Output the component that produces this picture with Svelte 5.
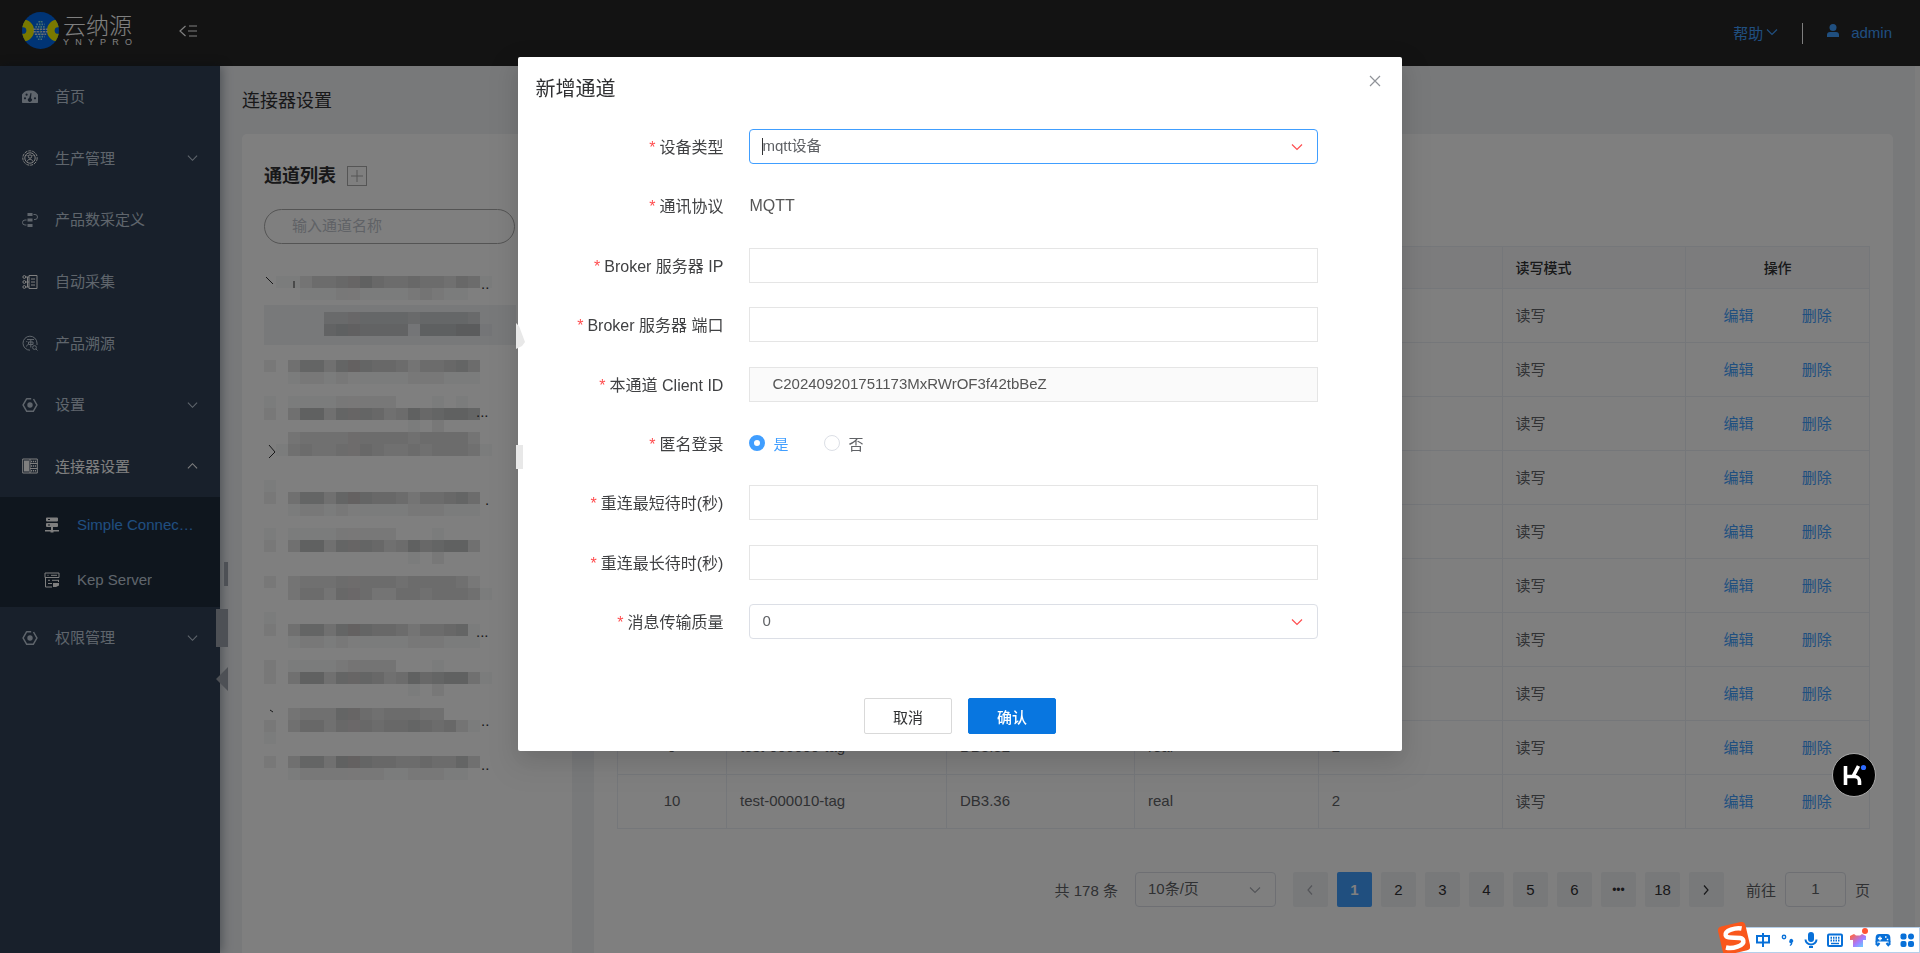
<script>
    const mainMenu = [
        { id: "home", label: "首页", icon: "gauge" },
        { id: "production", label: "生产管理", icon: "gear", arrow: "down" },
        { id: "define", label: "产品数采定义", icon: "flow" },
        { id: "collect", label: "自动采集", icon: "collect" },
        { id: "trace", label: "产品溯源", icon: "trace" },
        { id: "settings", label: "设置", icon: "nut", arrow: "down" },
        {
            id: "connector",
            label: "连接器设置",
            icon: "rack",
            arrow: "up",
            open: true,
        },
    ];

    const subMenu = [
        { id: "simple", label: "Simple Connector", icon: "server", active: true },
        { id: "kep", label: "Kep Server", icon: "form" },
    ];

    const extraMenu = [
        { id: "auth", label: "权限管理", icon: "nut", arrow: "down" },
    ];

    // Shade per 12px cell of the masked channel names, 0 = empty
    const maskRows = [
        "0113556786556554651",
        "0001112211112321100",
        "0000000000000000000",
        "0000044555554555540",
        "0000067766661777881",
        "0000000000000000000",
        "0000000000000000000",
        "2047747876653556750",
        "0012212111112221110",
        "0000000000000000000",
        "1011112222200010100",
        "2048847776458678870",
        "0000000000001020000",
        "0034444555554555530",
        "0145445565445455541",
        "0000000000000000000",
        "0000000000000000000",
        "1000000000000000000",
        "2047747876653556750",
        "0012212111112221110",
        "0000000000000000000",
        "1011112222200010000",
        "2048847776458678840",
        "0000000000001020000",
        "0000000000000000000",
        "2034445555545555420",
        "0035536653355455541",
        "0000000000000000000",
        "1000000000000000000",
        "2047747876653556710",
        "0012212111112221110",
        "0000000000000000000",
        "2011112333300010000",
        "2048847776458678841",
        "0000000000001020000",
        "0000000000000000000",
        "0034447754555440000",
        "2046646665667656310",
        "1000000000000000000",
        "0000000000000000000",
        "2047748876655655740",
        "0012222222112221100",
    ];
    const maskCells = maskRows.flatMap((line, row) =>
        [...line].map((level, col) => ({ row, col, level: Number(level) })),
    ).filter((cell) => cell.level > 0);

    const tags = Array.from({ length: 10 }, (_, i) => ({
        no: i + 1,
        name: `test-${String(i + 1).padStart(6, "0")}-tag`,
        address: `DB3.${i * 4}`,
        type: "real",
        length: 2,
        mode: "读写",
    }));

    const pages = ["1", "2", "3", "4", "5", "6", "•••", "18"];

    let deviceType = "mqtt设备";
    let anonymous = "yes";
    let quality = "0";
    let clientId = "C202409201751173MxRWrOF3f42tbBeZ";
    let brokerIp = "";
    let brokerPort = "";
    let minDelay = "";
    let maxDelay = "";
</script>

{#snippet chevron(dir)}
    <svg class="chevron" viewBox="0 0 12 12" width="12" height="12">
        {#if dir === "up"}
            <path d="M1 8.5 6 3.5l5 5" />
        {:else if dir === "left"}
            <path d="M8 1.5 4 6l4 4.5" />
        {:else if dir === "right"}
            <path d="M4 1.5 8 6l-4 4.5" />
        {:else}
            <path d="M1 3.5l5 5 5-5" />
        {/if}
    </svg>
{/snippet}

{#snippet menuIcon(name)}
    <svg class="menu-icon {name}" viewBox="0 0 16 16" width="16" height="16">
        {#if name === "gauge"}
            <path
                class="solid"
                fill-rule="evenodd"
                d="M8 1.5a8 8 0 0 0-7.500 12.500h15A8 8 0 0 0 8 1.500ZM3 8.200a1.100 1.100 0 1 1 0 2.200 1.100 1.100 0 0 1 0-2.200ZM4.600 4.600a1.100 1.100 0 1 1 0 2.200 1.100 1.100 0 0 1 0-2.200ZM13 8.200a1.100 1.100 0 1 1 0 2.200 1.100 1.100 0 0 1 0-2.200ZM9.500 4.200 9 9.200a2 2 0 1 1-1.800-.2L8.600 4Z"
            />
        {:else if name === "gear"}
            <circle cx="8" cy="8" r="7.2" stroke-dasharray="3 1" />
            <circle cx="8" cy="8" r="5.2" />
            <circle cx="8" cy="6.5" r="1.7" />
            <path d="M5.3 11.5c.5-3 4.9-3 5.4 0M4.5 5l1 1m6-1-1 1" />
        {:else if name === "flow"}
            <path class="solid" d="M5.500 1h5v3h-5ZM5.500 6.500h5v3h-5ZM5.500 12h5v3h-5Z" />
            <path d="M11.500 2.500h1.500a2.200 2.200 0 0 1 0 5h-1M4.500 8H3a2.500 2.500 0 0 0 0 5h1.500" />
        {:else if name === "collect"}
            <path d="M7 1.500h8v13H7ZM9 5h4M9 8h4M9 11h4" />
            <circle cx="2.3" cy="3" r="1.4" />
            <circle cx="2.3" cy="8" r="1.4" />
            <circle cx="2.3" cy="13" r="1.4" />
            <path d="M4 3h3M4 8h3M4 13h3M5.500 3v10" />
        {:else if name === "trace"}
            <path d="M8 15.200A7 7 0 1 1 15 8v2" />
            <path d="M5 4.500h7M6.500 7h4.500v2.500H6.500ZM8.800 4.500v8M4.300 6l1 1M4.500 11.500l1-2" />
            <circle cx="12.5" cy="12.5" r="1.9" />
            <path d="M14 14l1.500 1.500" />
        {:else if name === "nut"}
            <path
                class="thick"
                d="M4.500 1.700h4.700M11.500 2l3.400 6-3.600 6.300H4.700L1.100 8l3.600-6.300"
            />
            <circle class="solid" cx="8" cy="8" r="2.7" />
        {:else if name === "rack"}
            <path d="M.7 1h14.600v14H.7ZM8 1v14M8 5.500h7.300M8 10.500h7.300" />
            <path class="solid" d="M2 2.500h5v11H2Z" />
            <path class="thick" d="M9 3.500h5M9 8h5M9 12.700h5" stroke-dasharray="1.2 .8" />
        {:else if name === "server"}
            <path
                class="solid"
                fill-rule="evenodd"
                d="M3 .5h10a1 1 0 0 1 1 1v2a1 1 0 0 1-1 1H3a1 1 0 0 1-1-1v-2a1 1 0 0 1 1-1ZM4 2v1h2V2ZM3 6h10a1 1 0 0 1 1 1v2a1 1 0 0 1-1 1H3a1 1 0 0 1-1-1V7a1 1 0 0 1 1-1ZM4 7.500v1h2v-1ZM7 10h2v3h6v1.500H9.500v1h-3v-1H1V13h6Z"
            />
        {:else if name === "form"}
            <path d="M1 1h14v4.500H1ZM1.500 5.500v9.500H8M3.500 3.300h1M7 3.300h6M4 8.300h2M8 8.300h7M4 11.500h4M14.500 8v2" />
            <path class="solid" d="M9 11h6v2.500L12 15H9Z" />
        {/if}
    </svg>
{/snippet}

{#snippet menuItem(item)}
    <a class="menu-item" class:open={item.open} href="#{item.id}">
        {@render menuIcon(item.icon)}
        <span>{item.label}</span>
        {#if item.arrow}{@render chevron(item.arrow)}{/if}
    </a>
{/snippet}

<div class="layout">
    <header class="topbar">
        <div class="logo">
            <svg viewBox="0 0 36 36" width="37" height="37">
                <clipPath id="disc"><circle cx="18" cy="18" r="18" /></clipPath>
                <g clip-path="url(#disc)">
                    <rect width="36" height="36" fill="#0068ea" />
                    <circle cx="1" cy="18" r="7" fill="none" stroke="#f2f200" stroke-width="7.5" />
                    <circle cx="35" cy="18" r="7" fill="none" stroke="#f2f200" stroke-width="7.5" />
                </g>
                <path
                    d="M16 9.500h4M14 12h8M13 14.500h10M14 24h8M15.500 26.500h5"
                    stroke="#8fdcf0"
                    stroke-width="1.6"
                    stroke-dasharray="1.5 1"
                />
                <path
                    d="M11 16.800h14M11 19.200h14M12.500 21.600h11"
                    stroke="#d2dcea"
                    stroke-width="1.5"
                    stroke-dasharray="2.4 .7"
                />
                <path d="M18 9v18" stroke="#3fd1a5" stroke-dasharray="1 2" />
            </svg>
            <div class="brand">
                <span class="brand-cn">云纳源</span>
                <span class="brand-en">
                    {#each "YNYPRO" as letter}<i>{letter}</i>{/each}
                </span>
            </div>
        </div>
        <button class="fold" aria-label="收起菜单">
            <svg viewBox="0 0 18 14" width="18" height="14">
                <path d="M6.500 2 1 7l5.500 5M10 2h8M9 7h9M10 12h8" />
            </svg>
        </button>
        <div class="user-area">
            <a class="help" href="#help">帮助{@render chevron("down")}</a>
            <span class="divider"></span>
            <a class="user" href="#user">
                <svg viewBox="0 0 12 13" width="12" height="13">
                    <circle cx="6" cy="3.5" r="3.5" />
                    <path d="M0 13v-2a3 3 0 0 1 3-3h6a3 3 0 0 1 3 3v2Z" />
                </svg>
                admin
            </a>
        </div>
    </header>

    <div class="body">
        <nav class="sidebar">
            <div class="menu-group">
                {#each mainMenu as item (item.id)}
                    {@render menuItem(item)}
                {/each}
            </div>
            <div class="submenu">
                {#each subMenu as item (item.id)}
                    <a class="sub-item" class:active={item.active} href="#{item.id}">
                        {@render menuIcon(item.icon)}
                        <span>{item.label}</span>
                    </a>
                {/each}
            </div>
            {#each extraMenu as item (item.id)}
                {@render menuItem(item)}
            {/each}
        </nav>

        <main>
            <h1>连接器设置</h1>
            <div class="columns">
                <section class="card channels">
                    <div class="channels-head">
                        <h2>通道列表</h2>
                        <button class="add" aria-label="新增">
                            <svg viewBox="0 0 14 14" width="14" height="14">
                                <path d="M7 1v12M1 7h12" />
                            </svg>
                        </button>
                    </div>
                    <input class="search" aria-label="通道名称" placeholder="输入通道名称" />
                    <svg class="tree" viewBox="0 0 252 504" width="252" height="504">
                        <rect y="29" width="252" height="40" fill="#f0f2f5" />
                        {#each maskCells as cell}
                            <rect
                                x={cell.col * 12}
                                y={cell.row * 12}
                                width="12"
                                height="12"
                                fill={cell.col === 7 ? "#2a1214" : "#0c1012"}
                                fill-opacity={cell.level * 0.032}
                            />
                        {/each}
                        <path d="M2 1l7 7M5 169l6 7-6 6M6 434l3 2" />
                        <path d="M30 5v7" stroke="#c77a20" />
                        <text x="217" y="13">..</text>
                        <text x="212" y="141">...</text>
                        <text x="221" y="229">.</text>
                        <text x="212" y="361">...</text>
                        <text x="217" y="450">..</text>
                        <text x="217" y="494">..</text>
                    </svg>
                </section>

                <section class="card tags">
                    <table>
                        <colgroup>
                            <col class="c-no" />
                            <col class="c-name" />
                            <col class="c-addr" />
                            <col span="4" />
                        </colgroup>
                        <thead>
                            <tr>
                                <th class="center">序号</th>
                                <th>变量名称</th>
                                <th>地址</th>
                                <th>数据类型</th>
                                <th>长度</th>
                                <th>读写模式</th>
                                <th class="center">操作</th>
                            </tr>
                        </thead>
                        <tbody>
                            {#each tags as tag (tag.no)}
                                <tr>
                                    <td class="center">{tag.no}</td>
                                    <td>{tag.name}</td>
                                    <td>{tag.address}</td>
                                    <td>{tag.type}</td>
                                    <td>{tag.length}</td>
                                    <td>{tag.mode}</td>
                                    <td>
                                        <div class="actions">
                                            <a href="#edit">编辑</a>
                                            <a href="#delete">删除</a>
                                        </div>
                                    </td>
                                </tr>
                            {/each}
                        </tbody>
                    </table>

                    <div class="pagination">
                        <span class="total">共 178 条</span>
                        <div class="select-box page-size">
                            <select aria-label="每页条数">
                                <option>10条/页</option>
                            </select>
                            {@render chevron("down")}
                        </div>
                        <div class="pager">
                            <button class="muted" aria-label="上一页">{@render chevron("left")}</button>
                            {#each pages as page}
                                <button class:current={page === "1"} class:more={page === "•••"}>{page}</button>
                            {/each}
                            <button aria-label="下一页">{@render chevron("right")}</button>
                        </div>
                        <label class="jump">
                            前往
                            <input value="1" />
                            页
                        </label>
                    </div>
                </section>
            </div>
        </main>
    </div>
</div>

<div class="overlay">
    <div class="dialog" role="dialog" aria-labelledby="dialog-title">
        <div class="dialog-head">
            <h3 id="dialog-title">新增通道</h3>
            <button class="close" aria-label="关闭">
                <svg viewBox="0 0 12 12" width="12" height="12">
                    <path d="M1 1l10 10M11 1 1 11" />
                </svg>
            </button>
        </div>

        <form>
            <div class="field">
                <label for="device-type">设备类型</label>
                <div class="select-box focused">
                    <select id="device-type" bind:value={deviceType}>
                        <option>mqtt设备</option>
                    </select>
                    <span class="caret"></span>
                    {@render chevron("down")}
                </div>
            </div>
            <div class="field">
                <span class="label">通讯协议</span>
                <span class="plain">MQTT</span>
            </div>
            <div class="field">
                <label for="broker-ip">Broker 服务器 IP</label>
                <input id="broker-ip" type="text" bind:value={brokerIp} />
            </div>
            <div class="field">
                <label for="broker-port">Broker 服务器 端口</label>
                <input id="broker-port" type="text" bind:value={brokerPort} />
            </div>
            <div class="field">
                <label for="client-id">本通道 Client ID</label>
                <input id="client-id" type="text" value={clientId} disabled />
            </div>
            <div class="field">
                <span class="label">匿名登录</span>
                <div class="radios">
                    <label class="radio" class:checked={anonymous === "yes"}>
                        <input type="radio" name="anonymous" value="yes" bind:group={anonymous} />是
                    </label>
                    <label class="radio" class:checked={anonymous === "no"}>
                        <input type="radio" name="anonymous" value="no" bind:group={anonymous} />否
                    </label>
                </div>
            </div>
            <div class="field">
                <label for="min-delay">重连最短待时(秒)</label>
                <input id="min-delay" type="text" bind:value={minDelay} />
            </div>
            <div class="field">
                <label for="max-delay">重连最长待时(秒)</label>
                <input id="max-delay" type="text" bind:value={maxDelay} />
            </div>
            <div class="field">
                <label for="quality">消息传输质量</label>
                <div class="select-box">
                    <select id="quality" bind:value={quality}>
                        <option>0</option>
                        <option>1</option>
                        <option>2</option>
                    </select>
                    {@render chevron("down")}
                </div>
            </div>
        </form>

        <div class="dialog-foot">
            <button>取消</button>
            <button class="primary">确认</button>
        </div>
    </div>
</div>

<!-- Pieces of the side handles that stay above the overlay -->
<svg class="handles" viewBox="0 0 310 370" width="310" height="370">
    <path fill="#4d5055" d="M8 239h4v24H8ZM0 286h12v38H0ZM12 344v24L0 356Z" />
    <path fill="#e8e8e8" d="M300 0l3 3 6 16-3 4-6 3ZM300 122h7v24h-7Z" />
</svg>

<button class="assistant" aria-label="助手">
    <svg viewBox="0 0 42 42" width="42" height="42">
        <path d="M12.500 12v19M12.500 22.500h9a5 5 0 0 1 5 5V31M20 22.500 25.500 12" />
        <circle cx="30.5" cy="13.5" r="2.6" />
    </svg>
</button>

<div class="ime">
    <svg class="ime-logo" viewBox="0 0 32 32" width="32" height="32">
        <g transform="rotate(-13 16 16)">
            <rect x="2" y="2" width="28" height="29" rx="4" fill="#f9571c" />
            <path
                d="M25.500 8.500C20 6 8.500 6.500 8.500 11.500s16 3.500 16 9S12 26.500 6 23.500"
                fill="none"
                stroke="#fff"
                stroke-width="4.5"
            />
        </g>
    </svg>
    <svg viewBox="0 0 16 16" width="16" height="16">
        <path class="line" d="M2 4h12v6.500H2ZM8 1v14" />
    </svg>
    <svg viewBox="0 0 16 16" width="16" height="16">
        <circle class="line thin" cx="5" cy="5" r="1.7" />
        <path d="M10.500 8.500a1.900 1.900 0 1 1 3 1.800c0 2-1 3.200-2.500 3.700l-.3-1c.9-.5 1.200-1 1.100-1.700a2 2 0 0 1-1.300-2.800Z" />
    </svg>
    <svg viewBox="0 0 16 16" width="16" height="16">
        <rect x="5" y="0" width="6" height="10" rx="3" />
        <path class="line" d="M2.500 7.500a5.500 5 0 0 0 11 0M6 15h4" />
    </svg>
    <svg viewBox="0 0 16 16" width="16" height="16">
        <rect class="line" x="1" y="2.5" width="14" height="11.5" rx="1" />
        <path class="line" d="M3.500 5.800h9M3.500 8.500h9" stroke-dasharray="1.5 1" />
        <path class="line thin" d="M4 11.500h8" />
    </svg>
    <svg class="shirt" viewBox="0 0 18 20" width="18" height="20">
        <defs>
            <linearGradient id="shirt" x1="0" y1="0" x2="1" y2="1">
                <stop offset="0.1" stop-color="#ff6648" />
                <stop offset="0.55" stop-color="#a779ff" />
                <stop offset="1" stop-color="#55e6ff" />
            </linearGradient>
        </defs>
        <path fill="url(#shirt)" d="M4 6 0 8v4h3v7h10v-7h3V8l-4-2-2 1.500H6Z" />
        <circle cx="15" cy="3" r="3" fill="#ff5333" />
    </svg>
    <svg viewBox="0 0 16 16" width="16" height="16">
        <path
            fill-rule="evenodd"
            d="M4 2h8c2 0 3 1 3.300 3l.2 4.500h-15L.7 5C1 3 2 2 4 2Zm.3 2.500v1.300H3v1.400h1.300v1.300h1.400V7.200H7V5.800H5.700V4.500ZM10 4.300v1.500h1.500V4.300Zm1.800 2.400v1.500h1.500V6.700Z"
        />
        <path class="line" d="M4.500 11 2 14M11.500 11l2.500 3M1.500 9v4M14.500 9v4" />
    </svg>
    <svg viewBox="0 0 16 16" width="16" height="16">
        <rect x="1.5" y="1.5" width="6" height="6" rx="2" />
        <rect x="9" y="1.5" width="6" height="6" rx="3" />
        <rect x="1.5" y="9" width="6" height="6" rx="2" />
        <rect x="9" y="9" width="6" height="6" rx="2" />
    </svg>
</div>

<style>
    :global(body) {
        margin: 0;
        overflow: hidden;
        background: #f0f2f5;
        font-family: "Liberation Sans", "Noto Sans CJK SC", sans-serif;
        font-size: 15px;
        color: #606266;
    }

    * {
        box-sizing: border-box;
    }

    a {
        color: #409eff;
        text-decoration: none;
    }

    button,
    input,
    select {
        font: inherit;
        color: inherit;
    }

    button {
        padding: 0;
        border: none;
        background: none;
        cursor: pointer;
    }

    svg {
        flex-shrink: 0;
    }

    .chevron {
        fill: none;
        stroke: currentColor;
        stroke-width: 1.2;
    }

    .layout {
        display: flex;
        flex-direction: column;
        height: 100vh;
    }

    /* Top bar */
    .topbar {
        display: flex;
        align-items: center;
        height: 66px;
        flex-shrink: 0;
        padding: 0 28px 0 22px;
        background: #262626;
        color: #fff;
    }

    .logo {
        display: flex;
        align-items: center;
        gap: 4px;
        margin-bottom: 5px;
    }

    .brand {
        display: flex;
        flex-direction: column;
        width: 69px;
    }

    .brand-cn {
        font-size: 23px;
        line-height: 24px;
        font-weight: 300;
    }

    .brand-en {
        display: flex;
        justify-content: space-between;
        font-size: 9px;
        line-height: 9px;
    }

    .brand-en i {
        font-style: normal;
    }

    .fold {
        display: flex;
        margin: 0 0 5px 47px;
    }

    .fold svg {
        fill: none;
        stroke: #fff;
        stroke-width: 1.2;
    }

    .user-area {
        display: flex;
        align-items: center;
        margin-left: auto;
    }

    .help,
    .user {
        display: flex;
        align-items: center;
        padding-bottom: 2px;
    }

    .help {
        gap: 3px;
    }

    .divider {
        width: 1px;
        height: 21px;
        margin: 0 24px;
        background: #fff;
    }

    .user {
        gap: 12px;
    }

    .user svg {
        margin-bottom: 3px;
        fill: #409eff;
    }

    /* Sidebar */
    .body {
        display: flex;
        flex: 1;
        min-height: 0;
    }

    .sidebar {
        width: 220px;
        flex-shrink: 0;
        background: #304156;
        box-shadow: 2px 0 10px rgba(0, 21, 41, 0.35);
        z-index: 1;
    }

    .menu-group {
        display: flex;
        flex-direction: column;
        min-height: 431px;
    }

    .menu-group .menu-item {
        flex: 1;
    }

    .menu-item {
        display: flex;
        align-items: center;
        gap: 17px;
        min-height: 61px;
        padding: 0 22px;
        color: #bfcbd9;
    }

    .menu-item span {
        padding-bottom: 2px;
    }

    .menu-item.open {
        color: #fff;
    }

    .menu-item .chevron {
        width: 11px;
        margin-left: auto;
    }

    .menu-icon {
        fill: none;
        stroke: currentColor;
    }

    .menu-icon .solid {
        fill: currentColor;
        stroke: none;
    }

    .menu-icon .thick {
        stroke-width: 1.5;
    }

    .gear,
    .collect,
    .rack,
    .server,
    .form {
        color: #fff;
    }

    .submenu {
        background: #1f2d3d;
    }

    .sub-item {
        display: flex;
        align-items: center;
        gap: 17px;
        height: 55px;
        padding: 0 24px 0 44px;
        color: #bfcbd9;
    }

    .sub-item span {
        overflow: hidden;
        text-overflow: ellipsis;
        white-space: nowrap;
    }

    .sub-item.active span {
        color: #409eff;
    }

    /* Content */
    main {
        display: flex;
        flex-direction: column;
        flex: 1;
        min-width: 0;
        padding: 0 22px;
        border-right: 5px solid #fafafa;
    }

    h1 {
        margin: 22px 0 20px;
        font-size: 18px;
        line-height: 26px;
        font-weight: 400;
        color: #303133;
    }

    .columns {
        display: flex;
        flex: 1;
        gap: 22px;
        min-height: 0;
    }

    .card {
        padding: 0 22px;
        border-radius: 5px 5px 0 0;
        background: #fff;
    }

    .channels {
        width: 330px;
        flex-shrink: 0;
    }

    .channels-head {
        display: flex;
        align-items: center;
        gap: 11px;
        margin: 28px 0 19px;
    }

    h2 {
        margin: 0;
        font-size: 18px;
        line-height: 28px;
        color: #303133;
    }

    .add {
        display: flex;
        align-items: center;
        justify-content: center;
        width: 20px;
        height: 20px;
        border: 1px solid #aaa;
    }

    .add svg {
        stroke: #aaa;
    }

    .search {
        display: block;
        width: 251px;
        height: 35px;
        padding: 0 27px 2px;
        border: 1px solid #a8a8a8;
        border-radius: 18px;
        background: none;
    }

    .search::placeholder {
        color: #c0c4cc;
    }

    .tree {
        display: block;
        margin-top: 32px;
        fill: #303133;
    }

    .tree path {
        fill: none;
        stroke: #303133;
    }

    .tags {
        flex: 1;
        min-width: 0;
        padding: 112px 23px 0;
    }

    table {
        width: 100%;
        border-collapse: collapse;
        table-layout: fixed;
    }

    .c-no {
        width: 109px;
    }

    .c-name {
        width: 220px;
    }

    .c-addr {
        width: 188px;
    }

    th,
    td {
        height: 54px;
        padding: 0 13px 2px;
        border: 1px solid #ebeef5;
        text-align: left;
    }

    th {
        height: 42px;
        background: #f8f9fb;
        font-size: 14px;
        font-weight: 500;
        color: #303133;
    }

    .center {
        text-align: center;
    }

    .actions {
        display: flex;
        justify-content: center;
        gap: 48px;
    }

    .pagination {
        display: flex;
        align-items: center;
        justify-content: flex-end;
        margin-top: 43px;
    }

    .select-box {
        position: relative;
        flex: 1;
        display: flex;
    }

    .select-box select {
        width: 100%;
        height: 35px;
        padding: 0 12px 3px;
        border: 1px solid #dcdfe6;
        border-radius: 4px;
        background: #fff;
        appearance: none;
    }

    .select-box .chevron {
        position: absolute;
        top: 12px;
        right: 15px;
        pointer-events: none;
    }

    .page-size {
        flex: none;
        width: 141px;
        margin: 0 17px;
    }

    .page-size .chevron {
        color: #a8abb2;
    }

    .pager {
        display: flex;
        gap: 9px;
    }

    .pager button {
        display: flex;
        align-items: center;
        justify-content: center;
        width: 35px;
        height: 35px;
        border-radius: 2px;
        background: #f0f2f5;
        color: #303133;
    }

    .pager .muted {
        color: #a8abb2;
    }

    .pager .current {
        background: #409eff;
        color: #fff;
        font-weight: 700;
    }

    .pager .more {
        font-size: 12px;
    }

    .jump {
        display: flex;
        align-items: center;
        gap: 9px;
        margin-left: 22px;
    }

    .jump input {
        width: 61px;
        height: 35px;
        padding-bottom: 3px;
        border: 1px solid #dcdfe6;
        border-radius: 4px;
        text-align: center;
    }

    /* Dialog */
    .overlay {
        position: fixed;
        inset: 0;
        z-index: 10;
        background: rgba(0, 0, 0, 0.5);
    }

    .dialog {
        width: 46%;
        margin: 57px auto 0;
        padding: 17px;
        border-radius: 2px;
        background: #fff;
        box-shadow:
            0 12px 32px 16px rgba(0, 0, 0, 0.04),
            0 8px 24px rgba(0, 0, 0, 0.12);
    }

    .dialog-head {
        display: flex;
        align-items: flex-start;
        justify-content: space-between;
        margin-bottom: 24px;
    }

    h3 {
        margin: 0;
        font-size: 20px;
        line-height: 31px;
        font-weight: 400;
        color: #303133;
    }

    .close {
        display: flex;
        margin: 1px 4px 0 0;
    }

    .close svg {
        fill: none;
        stroke: #909399;
        stroke-width: 1.2;
    }

    form {
        display: flex;
        flex-direction: column;
        justify-content: space-between;
        min-height: 510px;
        padding-right: 67px;
    }

    .field {
        display: flex;
        align-items: center;
        height: 35px;
    }

    .field > label,
    .field > .label {
        width: 188px;
        margin-right: 26px;
        padding-bottom: 1px;
        flex-shrink: 0;
        text-align: right;
        font-size: 16px;
        color: #404143;
        white-space: nowrap;
    }

    .field > label::before,
    .field > .label::before {
        content: "*";
        margin-right: 4px;
        color: #ff4d4f;
    }

    .field > input {
        flex: 1;
        min-width: 0;
        height: 35px;
        padding: 0 22px 2px;
        border: 1px solid #e5e5e5;
        background: #fff;
    }

    .field > input:disabled {
        background: #fafafa;
        color: #555;
    }

    .field .chevron {
        color: #ff4d4f;
    }

    .focused select {
        border-color: #409eff;
    }

    .caret {
        position: absolute;
        top: 9px;
        left: 13px;
        width: 1px;
        height: 17px;
        background: #303133;
    }

    .plain {
        font-size: 16px;
        color: #555;
    }

    .radios {
        display: flex;
        gap: 36px;
    }

    .radio {
        display: flex;
        align-items: center;
        gap: 8px;
    }

    .radio.checked {
        color: #409eff;
    }

    .radio input {
        width: 16px;
        height: 16px;
        margin: 0;
        border: 1px solid #dcdfe6;
        border-radius: 50%;
        appearance: none;
    }

    .radio input:checked {
        border: 5px solid #409eff;
        background: #fff;
    }

    .dialog-foot {
        display: flex;
        justify-content: center;
        gap: 16px;
        margin-top: 59px;
    }

    .dialog-foot button {
        width: 88px;
        height: 36px;
        border: 1px solid #d9d9d9;
        border-radius: 2px;
        color: #303133;
    }

    .dialog-foot .primary {
        border-color: #0876e0;
        background: #0876e0;
        color: #fff;
        font-weight: 500;
    }

    .handles {
        position: fixed;
        top: 323px;
        left: 216px;
        z-index: 11;
        pointer-events: none;
    }

    /* Floating assistant button */
    .assistant {
        position: fixed;
        right: 44px;
        bottom: 156px;
        z-index: 12;
        display: flex;
        border: 1px solid #aaa;
        border-radius: 50%;
        background: #000;
    }

    .assistant path {
        fill: none;
        stroke: #fff;
        stroke-width: 3.6;
    }

    .assistant circle {
        fill: #2f6bff;
    }

    /* Input method bar */
    .ime {
        position: fixed;
        right: 0;
        bottom: 0;
        z-index: 12;
        display: flex;
        align-items: center;
        gap: 8px;
        height: 26px;
        padding-right: 4px;
        border: 1px solid #b5cfea;
        background: #fff;
        fill: #0870d8;
    }

    .ime-logo {
        margin: 0 -3px 4px -12px;
    }

    .ime .shirt {
        margin: 0 -1px 4px;
    }

    .ime .line {
        fill: none;
        stroke: #0870d8;
        stroke-width: 2;
    }

    .ime .thin {
        stroke-width: 1.4;
    }
</style>
